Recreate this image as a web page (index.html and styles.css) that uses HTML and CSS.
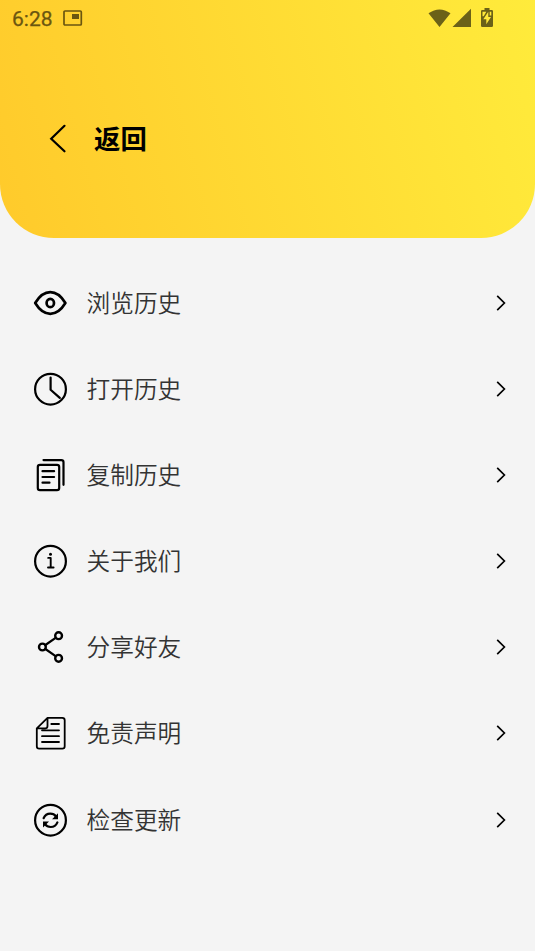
FILE: index.html
```html
<!DOCTYPE html>
<html lang="zh-CN">
<head>
<meta charset="utf-8">
<title>返回</title>
<link rel="stylesheet" href="styles.css">
</head>
<body>
<header class="header">
  <div class="status">
    <span class="time">6:28</span>
    <svg class="pip" width="20" height="16" viewBox="0 0 20 16"><rect x="1" y="1" width="17.3" height="14" rx="1" fill="none" stroke="currentColor" stroke-width="1.7"/><path d="M9 4h7v5H9z" fill="currentColor"/></svg>
    <svg class="signals" width="68" height="22" viewBox="0 0 68 22"><path d="M.5 5.3Q11.5-2.3 22.5 5.3L11.5 19z M24.5 19L43 .7V19z" fill="currentColor"/><path fill-rule="evenodd" d="M56.500 0h5v2h2.200q1.300 0 1.300 1.300v14.400q0 1.300-1.300 1.300h-9.400q-1.300 0-1.300-1.300V3.300q0-1.300 1.300-1.300h2.200zM60.300 3.800L55.300 11.300h3v5L63 9h-2.700zM54.500 3.800h3.800l-2.600 4.400h-1.200zM61.700 3.800h1.600v3.700h-1.600z" fill="currentColor"/></svg>
  </div>
  <div class="nav">
    <svg class="back" width="20" height="32" viewBox="0 0 20 32"><path d="M16.500 3.800L3.200 16.700L16.500 29.300" fill="none" stroke="#000" stroke-width="2.2" stroke-linecap="round"/></svg>
    <h1 class="title">返回</h1>
  </div>
</header>
<main class="menu">
  <div class="row"><svg class="icon" viewBox="0 0 36 36"><path d="M3.200 18Q9.800 7.200 18.300 7.200T33.400 18Q26.800 28.800 18.300 28.800T3.200 18z" stroke-width="2.700"/><ellipse cx="18.300" cy="18" rx="3.700" ry="4.200" stroke-width="2.700"/></svg><span class="label">浏览历史</span><svg class="chevron" viewBox="0 0 12 18"><path d="M2.200 1.800L9.400 9L2.200 16.200"/></svg></div>
  <div class="row"><svg class="icon" viewBox="0 0 36 36"><circle cx="18.500" cy="18.200" r="15.400"/><path d="M18.600 6.500v12.200l9.200 8.200"/></svg><span class="label">打开历史</span><svg class="chevron" viewBox="0 0 12 18"><path d="M2.200 1.800L9.400 9L2.200 16.200"/></svg></div>
  <div class="row"><svg class="icon" viewBox="0 0 36 36"><path d="M11.500 3.100h17.800q2.200 0 2.200 2.200v22.500"/><rect x="5.800" y="7.900" width="21.400" height="25.300" rx="2.200"/><path d="M10.500 14.200h11.600M10.500 20h11.600M10.500 25.700h7"/></svg><span class="label">复制历史</span><svg class="chevron" viewBox="0 0 12 18"><path d="M2.200 1.800L9.400 9L2.200 16.200"/></svg></div>
  <div class="row"><svg class="icon" viewBox="0 0 36 36"><circle cx="18.500" cy="18.200" r="15.400"/><path d="M16.200 14.900h2.500v9.500M16 24.500h5.600" stroke-width="1.900"/><circle cx="18.500" cy="11.200" r="1.500" class="solid"/></svg><span class="label">关于我们</span><svg class="chevron" viewBox="0 0 12 18"><path d="M2.200 1.800L9.400 9L2.200 16.200"/></svg></div>
  <div class="row"><svg class="icon" viewBox="0 0 36 36"><circle cx="26.600" cy="6.700" r="3.400" stroke-width="2.400"/><circle cx="10.400" cy="18" r="3.400" stroke-width="2.400"/><circle cx="26.600" cy="29.300" r="3.400" stroke-width="2.400"/><path d="M13.400 16l10.200-7.200M13.400 20l10.200 7.200"/></svg><span class="label">分享好友</span><svg class="chevron" viewBox="0 0 12 18"><path d="M2.200 1.800L9.400 9L2.200 16.200"/></svg></div>
  <div class="row"><svg class="icon thin" viewBox="0 0 36 36"><path d="M15.500 2.900h14.800q2.400 0 2.400 2.400v25.900q0 2.400-2.400 2.400H7.200q-2.400 0-2.400-2.400V13.300zM15.500 2.900v8q0 2.400-2.400 2.400H4.800M19.300 9h7.700M10 15.300h17M10 21.200h17M10 27h17"/></svg><span class="label">免责声明</span><svg class="chevron" viewBox="0 0 12 18"><path d="M2.200 1.800L9.400 9L2.200 16.200"/></svg></div>
  <div class="row"><svg class="icon" viewBox="0 0 36 36"><circle cx="18.500" cy="18.200" r="15.400"/><path d="M11.600 16.200Q13.500 11.700 18.300 11.700q3.700 0 5.700 2.800M25.400 20.400Q23.500 25 18.700 25q-3.700 0-5.700-2.800"/><path class="solid" d="M26 11.200v6h-6zM11 25.400v-6h6z"/></svg><span class="label">检查更新</span><svg class="chevron" viewBox="0 0 12 18"><path d="M2.200 1.800L9.400 9L2.200 16.200"/></svg></div>
</main>
</body>
</html>
```

FILE: styles.css
```css
* { box-sizing: border-box; }
body {
  margin: 0;
  min-height: 951px;
  background: #f4f4f4;
  font-family: "Noto Sans CJK SC", sans-serif;
}
svg { display: block; flex: none; }
.header {
  height: 238px;
  border-radius: 0 0 54px 54px;
  background: linear-gradient(75deg, #ffca2b, #ffeb3b);
}
.status {
  display: flex;
  align-items: center;
  height: 36px;
  padding: 0 39px 0 12px;
  color: #6b5610;
}
.time {
  width: 51px;
  padding-top: 2px;
  font: 400 21px/36px Roboto, sans-serif;
  -webkit-text-stroke: 0.25px currentColor;
}
.signals { margin-left: auto; margin-top: 1px; color: #6b6118; }
.nav {
  display: flex;
  align-items: center;
  height: 40px;
  margin-top: 82px;
  padding-left: 48px;
}
.title {
  margin: 0 0 0 26px;
  font-size: 26.4px;
  line-height: 40px;
  font-weight: 700;
  color: #000;
}
.menu { padding: 21.7px 28.500px 0 32px; }
.row {
  display: flex;
  align-items: center;
  height: 86.15px;
}
.icon {
  width: 36px;
  height: 36px;
  fill: none;
  stroke: #000;
  stroke-width: 2.2;
  stroke-linecap: round;
  stroke-linejoin: round;
}
.thin { stroke-width: 1.8; }
.solid { fill: #000; stroke: none; }
.label {
  flex: 1;
  margin: -2px 0 0 18.500px;
  font-size: 23.7px;
  line-height: 36px;
  font-weight: 350;
  color: #333;
}
.chevron {
  width: 12px;
  height: 18px;
  fill: none;
  stroke: #000;
  stroke-width: 1.7;
}
```
